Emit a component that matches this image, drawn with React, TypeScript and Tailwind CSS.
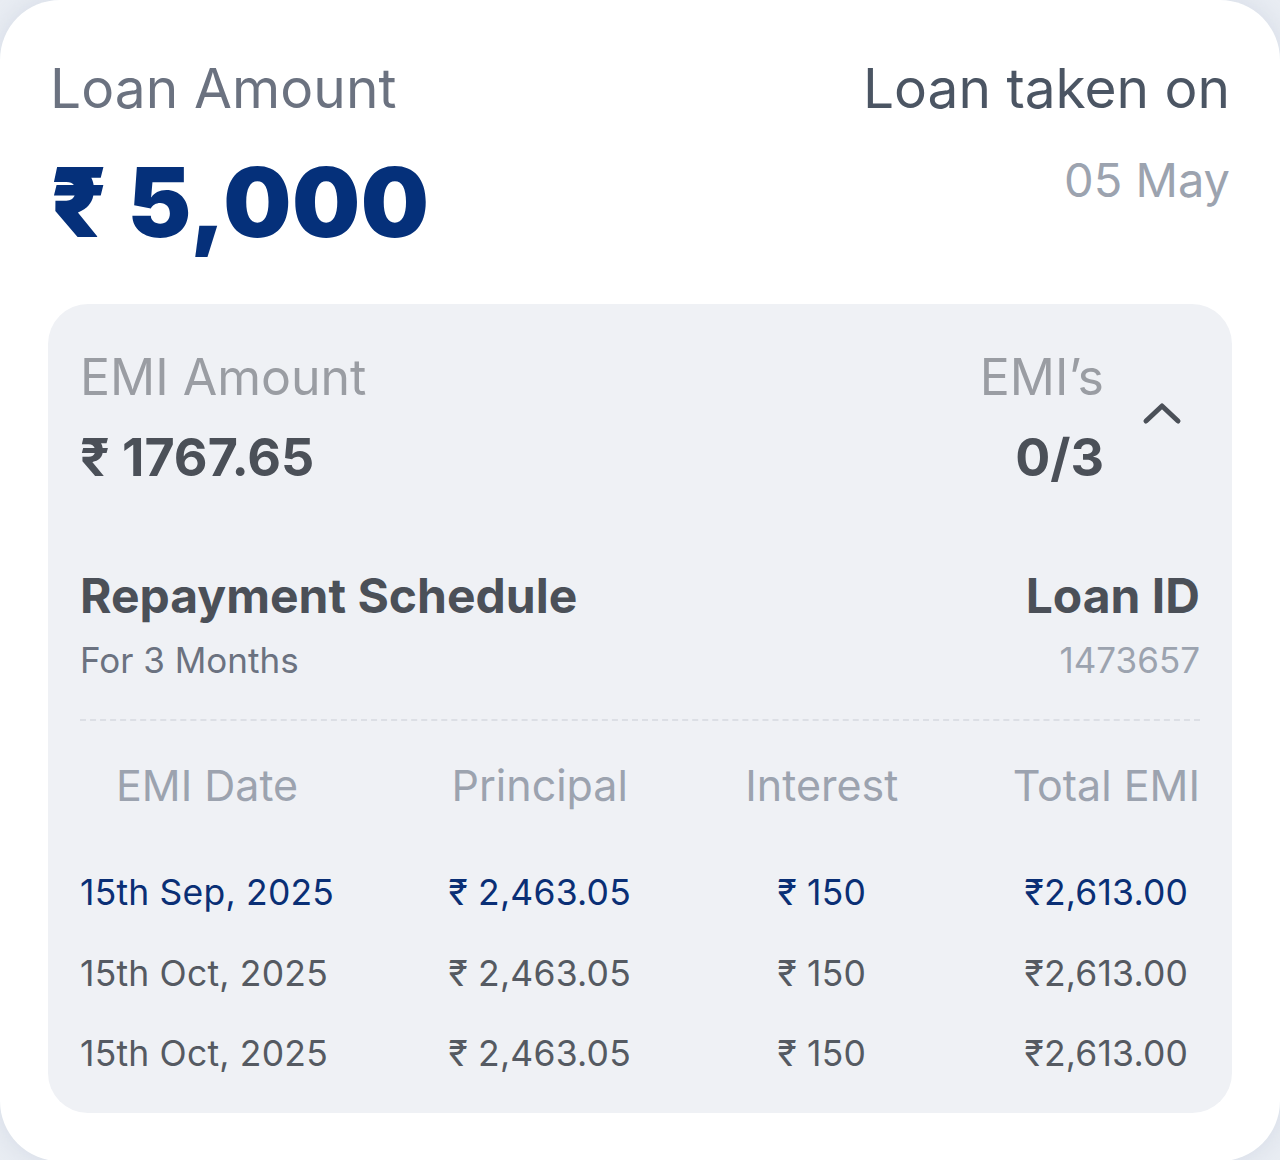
import React from "react";

const rows = [
  { date: "15th Sep, 2025", principal: "₹ 2,463.05", interest: "₹ 150", total: "₹2,613.00", active: true },
  { date: "15th Oct, 2025", principal: "₹ 2,463.05", interest: "₹ 150", total: "₹2,613.00", active: false },
  { date: "15th Oct, 2025", principal: "₹ 2,463.05", interest: "₹ 150", total: "₹2,613.00", active: false },
];

function Column({
  header,
  values,
  align = "items-center",
}: {
  header: string;
  values: { v: string; active: boolean }[];
  align?: string;
}) {
  return (
    <div className="flex flex-col items-center">
      <div className="text-[43px] leading-none text-[#9ca3af] whitespace-nowrap">{header}</div>
      <div className={`mt-[68px] flex flex-col self-stretch gap-[45px] ${align}`}>
        {values.map((x, i) => (
          <div
            key={i}
            className={`text-[35.5px] leading-none tracking-[0.2px] whitespace-nowrap ${x.active ? "text-[#0a2f75]" : "text-[#555a62]"}`}
          >
            {x.v}
          </div>
        ))}
      </div>
    </div>
  );
}

export default function App() {
  return (
    <div className="min-h-[1160px] w-[1280px] bg-[#e9edf3]" style={{ fontFamily: "Inter, 'Noto Sans', sans-serif" }}>
      <div className="min-h-[1160px] w-[1280px] rounded-[60px] bg-white px-[48px] pt-[61px] pb-[48px] shadow-[0_0_24px_rgba(150,165,190,0.25)]">
        <div className="flex justify-between px-[2px]">
          <div className="flex flex-col">
            <div className="text-[55px] leading-none tracking-[0.1px] text-[#6b7280]">Loan Amount</div>
            <div className="mt-[38px] text-[96px] leading-none font-black tracking-[0.5px] text-[#05307a]">₹ 5,000</div>
          </div>
          <div className="flex flex-col items-end">
            <div className="text-[55px] leading-none text-[#4b5563]">Loan taken on</div>
            <div className="mt-[40px] text-[47px] leading-none text-[#9ca3af]">05 May</div>
          </div>
        </div>

        <div className="mt-[54px] rounded-[40px] bg-[#eff1f5] px-[32px] pt-[48px] pb-[41px]">
          <div className="flex items-start justify-between">
            <div className="flex flex-col">
              <div className="text-[50px] leading-none text-[#9a9da3]">EMI Amount</div>
              <div className="mt-[30px] text-[52px] leading-none font-bold text-[#4b5058]">₹ 1767.65</div>
            </div>
            <div className="flex items-center gap-[38px] pr-[18px]">
              <div className="flex flex-col items-end">
                <div className="text-[50px] leading-none text-[#9a9da3]">EMI’s</div>
                <div className="mt-[30px] text-[52px] leading-none font-bold text-[#4b5058]">0/3</div>
              </div>
              <svg width="40" height="24" viewBox="0 0 40 24" fill="none" className="-mt-[10px]">
                <path d="M4 20 L20 5 L36 20" stroke="#4b5058" strokeWidth="5" strokeLinecap="round" strokeLinejoin="round" />
              </svg>
            </div>
          </div>

          <div className="mt-[88px] flex items-start justify-between">
            <div className="flex flex-col">
              <div className="text-[48px] leading-none font-bold text-[#4b5058]">Repayment Schedule</div>
              <div className="mt-[23px] text-[35px] leading-none text-[#6b7280]">For 3 Months</div>
            </div>
            <div className="flex flex-col items-end">
              <div className="text-[48px] leading-none font-bold text-[#4b5058]">Loan ID</div>
              <div className="mt-[23px] text-[35px] leading-none text-[#9ca3af]">1473657</div>
            </div>
          </div>

          <div className="mt-[41px] border-t-2 border-dashed border-[#dcdfe5]" />

          <div className="mt-[43px] flex justify-between">
            <Column header="EMI Date" align="items-start" values={rows.map((r) => ({ v: r.date, active: r.active }))} />
            <Column header="Principal" values={rows.map((r) => ({ v: r.principal, active: r.active }))} />
            <Column header="Interest" values={rows.map((r) => ({ v: r.interest, active: r.active }))} />
            <Column header="Total EMI" values={rows.map((r) => ({ v: r.total, active: r.active }))} />
          </div>
        </div>
      </div>
    </div>
  );
}
